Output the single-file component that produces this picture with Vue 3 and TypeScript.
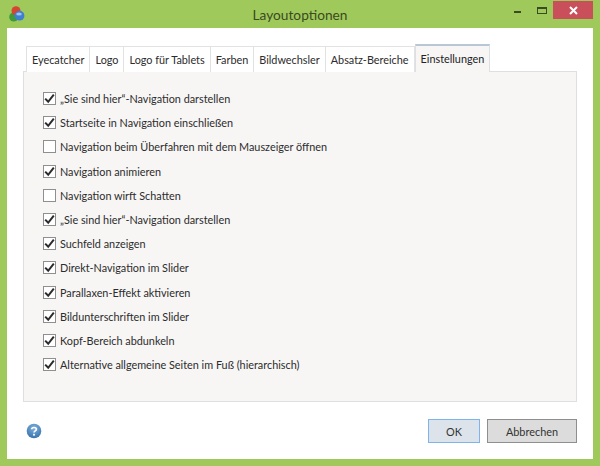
<script setup lang="ts">
const tabs = ['Eyecatcher', 'Logo', 'Logo für Tablets', 'Farben', 'Bildwechsler', 'Absatz-Bereiche', 'Einstellungen']
const options: { label: string; checked: boolean }[] = [
  { label: '„Sie sind hier“-Navigation darstellen', checked: true },
  { label: 'Startseite in Navigation einschließen', checked: true },
  { label: 'Navigation beim Überfahren mit dem Mauszeiger öffnen', checked: false },
  { label: 'Navigation animieren', checked: true },
  { label: 'Navigation wirft Schatten', checked: false },
  { label: '„Sie sind hier“-Navigation darstellen', checked: true },
  { label: 'Suchfeld anzeigen', checked: true },
  { label: 'Direkt-Navigation im Slider', checked: true },
  { label: 'Parallaxen-Effekt aktivieren', checked: true },
  { label: 'Bildunterschriften im Slider', checked: true },
  { label: 'Kopf-Bereich abdunkeln', checked: true },
  { label: 'Alternative allgemeine Seiten im Fuß (hierarchisch)', checked: true },
]
</script>

<template>
  <div class="window">
    <header class="titlebar">
      <svg class="app-icon" width="16" height="16" viewBox="0 0 16 16">
        <circle cx="4.7" cy="11" r="4.5" fill="#3f9a3a" />
        <circle cx="7" cy="4.7" r="4.5" fill="#d8442f" />
        <circle cx="10.5" cy="9.7" r="4.9" fill="#3f7fd0" />
        <ellipse cx="10" cy="8" rx="2.8" ry="1.5" fill="#9cc4ee" />
      </svg>
      <span class="title">Layoutoptionen</span>
      <div class="controls">
        <span class="min"></span>
        <span class="max"></span>
        <span class="close">
          <svg width="9" height="9" viewBox="0 0 9 9"><path d="M1 1 8 8M8 1 1 8" stroke="#fff" stroke-width="2" /></svg>
        </span>
      </div>
    </header>
    <main class="client">
      <nav class="tabs">
        <div v-for="(t, i) in tabs" :key="t" class="tab" :class="{ active: i === tabs.length - 1 }">{{ t }}</div>
      </nav>
      <section class="panel">
        <label v-for="(o, i) in options" :key="i" class="row">
          <span class="box">
            <svg v-if="o.checked" width="11" height="11" viewBox="0 0 11 11">
              <path d="M1.2 5.6 4.2 8.8 9.8 1.6" fill="none" stroke="#2b2b2b" stroke-width="2" />
            </svg>
          </span>
          <span>{{ o.label }}</span>
        </label>
      </section>
      <footer class="footer">
        <svg class="help" width="16" height="16" viewBox="0 0 16 16">
          <defs>
            <radialGradient id="helpFill" cx="0.5" cy="0.3" r="0.8">
              <stop offset="0" stop-color="#7fb0dc" />
              <stop offset="1" stop-color="#2f6ca8" />
            </radialGradient>
          </defs>
          <circle cx="8" cy="8" r="7.3" fill="url(#helpFill)" />
          <path d="M5.6 6.2C5.8 3.9 10.4 3.9 10.4 6.2 10.4 7.9 8 7.8 8 9.6" fill="none" stroke="#fff" stroke-width="1.7" />
          <rect x="7.1" y="10.8" width="1.8" height="1.8" fill="#fff" />
        </svg>
        <div class="buttons">
          <button class="btn ok">OK</button>
          <button class="btn cancel">Abbrechen</button>
        </div>
      </footer>
    </main>
  </div>
</template>

<style>
html, body { margin: 0; padding: 0; }
</style>

<style scoped>
.window {
  width: 600px;
  height: 466px;
  box-sizing: border-box;
  background: #9fc95b;
  padding: 0 7px 7px;
  display: flex;
  flex-direction: column;
  font-family: Lato, Roboto, sans-serif;
  font-size: 10.85px;
  color: #2c2c2c;
  overflow: hidden;
}
.titlebar {
  height: 28px;
  flex: none;
  position: relative;
  display: flex;
  align-items: center;
  justify-content: center;
}
.app-icon { position: absolute; left: 2px; top: 6px; }
.title { font-size: 13.7px; color: #3b4a22; margin-top: 1px; }
.controls {
  position: absolute;
  right: 0;
  top: 1px;
  display: flex;
  align-items: flex-start;
}
.min { width: 7px; height: 2px; background: #3a4a26; margin: 10px 16px 0 0; }
.max { width: 10px; height: 7px; box-sizing: border-box; border: 1px solid #3a4a26; border-top-width: 2px; margin: 6px 6px 0 0; }
.close {
  width: 40px;
  height: 18px;
  background: #c9505a;
  display: flex;
  align-items: center;
  justify-content: center;
}
.client {
  flex: 1;
  background: #fff;
  display: flex;
  flex-direction: column;
  padding: 16px 16px 0;
}
.tabs {
  display: flex;
  align-items: flex-end;
  padding-left: 3px;
  height: 28px;
  position: relative;
  z-index: 1;
  margin-bottom: -1px;
}
.tab {
  height: 26px;
  box-sizing: border-box;
  padding: 0 5px;
  line-height: 26px;
  background: #fff;
  border: 1px solid #e2e2e2;
  border-bottom: none;
  margin-right: -1px;
  white-space: nowrap;
}
.tab.active {
  height: 28px;
  line-height: 25px;
  background: #f7f6f5;
  border-color: #dcdfe3;
  border-top: 2px solid #b9c6d6;
  padding: 0 5px;
  margin-left: 1px;
  color: #222;
}
.panel {
  height: 331px;
  box-sizing: border-box;
  background: #f7f6f5;
  border: 1px solid #dfdfdf;
  padding: 14.5px 19px 0;
  display: flex;
  flex-direction: column;
  gap: 0;
}
.row {
  height: 24.2px;
  display: flex;
  align-items: center;
  gap: 4px;
  flex: none;
}
.box {
  width: 11px;
  height: 11px;
  border: 1px solid #8f8f8f;
  background: #fff;
  display: flex;
  align-items: center;
  justify-content: center;
  flex: none;
}
.footer {
  flex: 1;
  display: flex;
  align-items: center;
  justify-content: space-between;
  padding: 0 0 0 3px;
}
.help { margin-top: 1px; }
.buttons { display: flex; gap: 7px; margin-top: 1px; }
.btn {
  height: 24px;
  font: inherit;
  font-size: 10.9px;
  color: #333;
  background: #dcdcdc;
  padding: 0;
}
.ok { width: 52px; border: 1px solid #7eb4ea; background: #dde3ea; }
.cancel { width: 90px; border: 1px solid #8e8e8e; }
</style>
